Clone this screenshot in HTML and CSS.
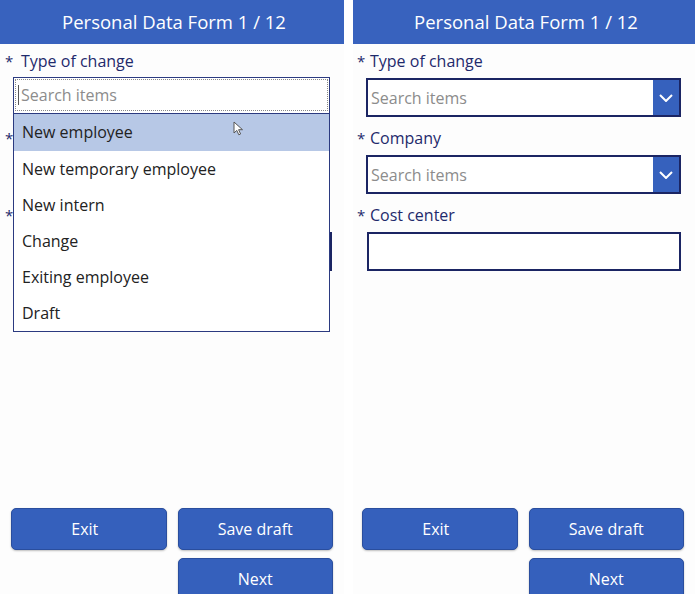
FILE: index.html
```html
<!DOCTYPE html>
<html lang="en">
  <head>
    <meta charset="UTF-8" />
    <meta name="viewport" content="width=device-width, initial-scale=1.0" />
    <title>Personal Data Form</title>
    <link rel="stylesheet" href="styles.css">
  </head>
  <body>
    <div class="screens">
      <!-- left: type-of-change dropdown opened -->
      <div class="screen screen-left">
        <div class="header">Personal Data Form 1 / 12</div>

        <div class="form">
          <div class="field">
            <div class="label"><span class="star">*</span>Type of change</div>
            <div class="combo-open">
              <div class="dropdown">
                <div class="dd-search"><span class="caret"></span>Search items</div>
                <div class="dd-list">
                  <div class="dd-item selected">New employee</div>
                  <div class="dd-item">New temporary employee</div>
                  <div class="dd-item">New intern</div>
                  <div class="dd-item">Change</div>
                  <div class="dd-item">Exiting employee</div>
                  <div class="dd-item">Draft</div>
                </div>
              </div>
            </div>
          </div>
          <div class="field">
            <div class="label"><span class="star">*</span><span class="covered">Company</span></div>
            <div class="combo">
              <span class="combo-btn"></span>
            </div>
          </div>
          <div class="field">
            <div class="label"><span class="star">*</span><span class="covered">Cost center</span></div>
            <div class="textbox"></div>
          </div>
        </div>

        <svg class="pointer" width="11" height="15" viewBox="0 0 11 15">
          <path d="M1 1v11l2.8-2.6 2 4.4 1.8-.8-2-4.3H9.5z" fill="#fff" stroke="#555" stroke-width="1"/>
        </svg>

        <div class="actions">
          <button class="exit">Exit</button>
          <button>Save draft</button>
          <button class="next">Next</button>
        </div>
      </div>

      <!-- right: form closed -->
      <div class="screen screen-right">
        <div class="header">Personal Data Form 1 / 12</div>

        <div class="form">
          <div class="field">
            <div class="label"><span class="star">*</span>Type of change</div>
            <div class="combo">
              <span class="placeholder">Search items</span>
              <span class="combo-btn">
                <svg width="14" height="8" viewBox="0 0 14 8"><path d="M1 1l6 6 6-6" fill="none" stroke="#fff" stroke-width="2"/></svg>
              </span>
            </div>
          </div>
          <div class="field">
            <div class="label"><span class="star">*</span>Company</div>
            <div class="combo">
              <span class="placeholder">Search items</span>
              <span class="combo-btn">
                <svg width="14" height="8" viewBox="0 0 14 8"><path d="M1 1l6 6 6-6" fill="none" stroke="#fff" stroke-width="2"/></svg>
              </span>
            </div>
          </div>
          <div class="field">
            <div class="label"><span class="star">*</span>Cost center</div>
            <div class="textbox"></div>
          </div>
        </div>

        <div class="actions">
          <button class="exit">Exit</button>
          <button>Save draft</button>
          <button class="next">Next</button>
        </div>
      </div>
    </div>
  </body>
</html>
```

FILE: styles.css
```css
* {
  box-sizing: border-box;
}

html,
body {
  margin: 0;
  overflow: hidden;
  background: #fff;
}

body {
  font-family: "Open Sans", "Noto Sans", sans-serif;
  color: #222;
}

.screens {
  display: flex;
  gap: 9px;
}

.screen {
  position: relative;
  width: 344px;
  height: 610px;
  display: flex;
  flex-direction: column;
  background: #fdfdfd;
}

.screen-right {
  width: 342px;
}

.header {
  height: 44px;
  background: #3862be;
  color: #fff;
  font-size: 18.5px;
  line-height: 44px;
  text-align: center;
  padding-left: 4px;
}

.form {
  padding: 7px 14px 0 13px;
  display: flex;
  flex-direction: column;
  gap: 11px;
}

.label {
  height: 20px;
  margin-bottom: 7px;
  display: flex;
  align-items: center;
  color: #1f2a6c;
  font-size: 16px;
}

.star {
  width: 16px;
  margin-left: -8px;
  font-size: 15px;
  color: #1f2a6c;
}

.screen-right .star {
  width: 13px;
  margin-left: -9px;
}

.covered {
  visibility: hidden;
}

.combo {
  height: 39px;
  border: 2px solid #1b2563;
  display: flex;
  align-items: center;
  justify-content: flex-end;
  background: #fff;
}

.placeholder {
  flex: 1;
  padding-left: 3px;
  color: #8c8c8c;
  font-size: 16px;
}

.combo-btn {
  width: 26px;
  align-self: stretch;
  background: #3661bd;
  display: flex;
  align-items: center;
  justify-content: center;
}

.textbox {
  height: 39px;
  border: 2px solid #1b2563;
  background: #fff;
  margin-left: 1px;
}

.screen-left .textbox {
  margin-right: -2px;
}

/* opened list on the left screen */
.combo-open {
  position: relative;
  height: 39px;
}

.dropdown {
  position: absolute;
  left: 0;
  top: -1px;
  width: 317px;
  border: 1px solid #2b3a80;
  background: #fff;
  z-index: 1;
}

.dd-search {
  margin: 1px;
  height: 32px;
  border: 1px dotted #888;
  display: flex;
  align-items: center;
  padding-left: 2px;
  color: #8c8c8c;
  font-size: 16px;
}

.caret {
  width: 1px;
  height: 20px;
  background: #555;
  margin-right: 2px;
}

.dd-list {
  border-top: 1px solid #2b3a80;
  margin-top: 2px;
}

.dd-item {
  height: 36px;
  line-height: 36px;
  padding-left: 8px;
  font-size: 16px;
  color: #222;
}

.dd-item.selected {
  height: 37px;
  background: #b7c8e6;
}

.pointer {
  position: absolute;
  left: 233px;
  top: 121px;
  z-index: 2;
}

.actions {
  margin-top: auto;
  padding: 0 11px 10px;
  display: grid;
  grid-template-columns: 1fr 1fr;
  gap: 8px 11px;
}

.screen-right .actions {
  padding: 0 11px 10px 9px;
}

button {
  height: 42px;
  border: 1px solid #2a4e9e;
  border-radius: 5px;
  background: #3560bc;
  color: #fff;
  font-family: inherit;
  font-size: 16px;
  box-shadow: 0 1px 2px rgba(0, 0, 0, 0.25);
}

button.exit {
  padding-right: 14px;
}

button.next {
  grid-column: 2;
}
```
